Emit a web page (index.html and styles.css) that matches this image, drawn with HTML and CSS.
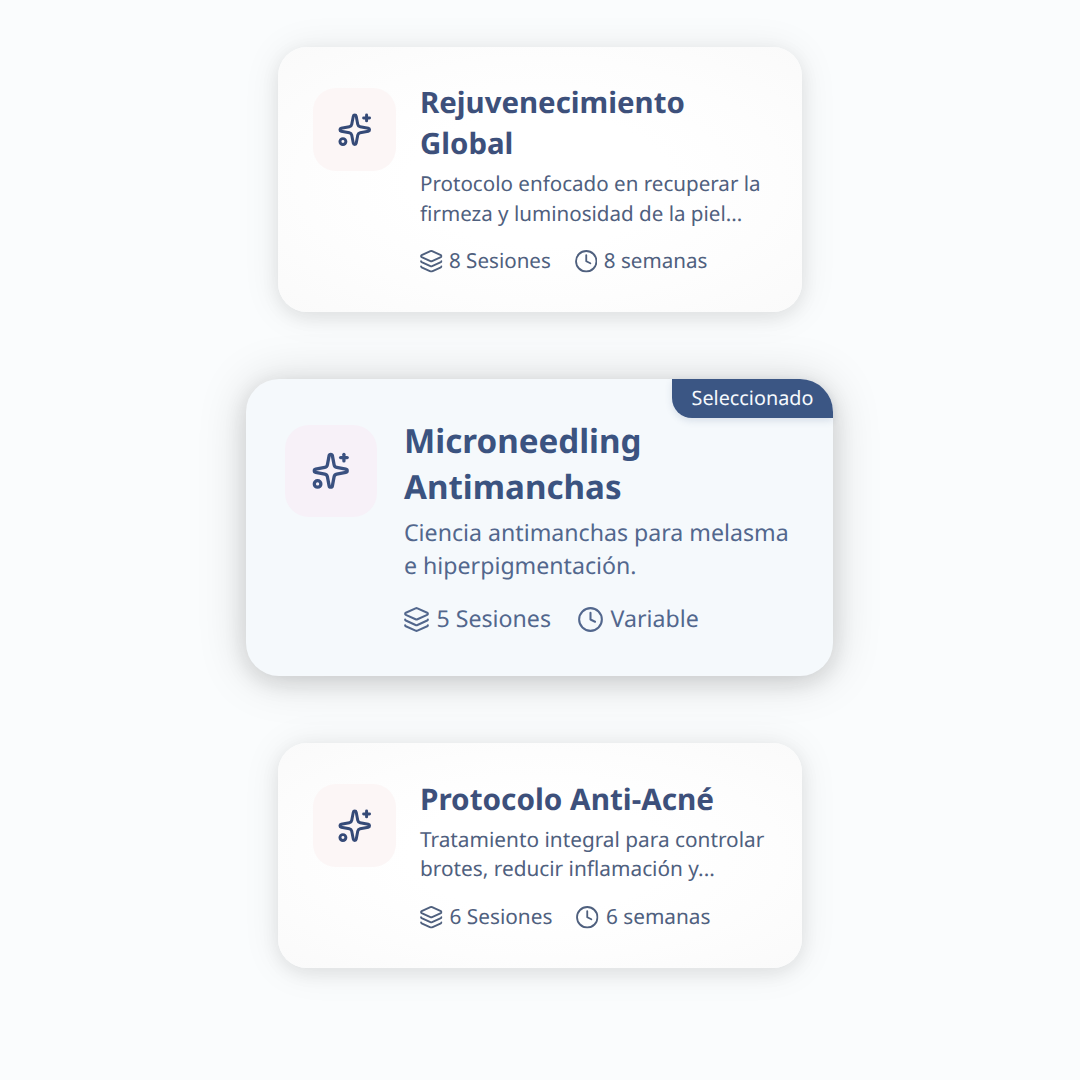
FILE: index.html
```html
<!DOCTYPE html>
<html lang="es">
<head>
<meta charset="utf-8">
<title>Protocolos</title>
<link rel="stylesheet" href="styles.css">
</head>
<body>
<svg class="defs" aria-hidden="true">
  <symbol id="sparkles" viewBox="0 0 24 24"><path d="M11.017 2.814a1 1 0 0 1 1.966 0l1.051 5.558a2 2 0 0 0 1.594 1.594l5.558 1.051a1 1 0 0 1 0 1.966l-5.558 1.051a2 2 0 0 0-1.594 1.594l-1.051 5.558a1 1 0 0 1-1.966 0l-1.051-5.558a2 2 0 0 0-1.594-1.594l-5.558-1.051a1 1 0 0 1 0-1.966l5.558-1.051a2 2 0 0 0 1.594-1.594z"/><path d="M20 2v4"/><path d="M22 4h-4"/><circle cx="4" cy="20" r="2"/></symbol>
  <symbol id="layers" viewBox="1 1 22 22"><path d="M12.83 2.18a2 2 0 0 0-1.66 0L2.6 6.08a1 1 0 0 0 0 1.83l8.58 3.91a2 2 0 0 0 1.66 0l8.58-3.9a1 1 0 0 0 0-1.83z"/><path d="M2 12a1 1 0 0 0 .58.91l8.6 3.91a2 2 0 0 0 1.65 0l8.58-3.9A1 1 0 0 0 22 12"/><path d="M2 17a1 1 0 0 0 .58.91l8.6 3.91a2 2 0 0 0 1.65 0l8.58-3.9A1 1 0 0 0 22 17"/></symbol>
  <symbol id="clock" viewBox="1 1 22 22"><circle cx="12" cy="12" r="10"/><path d="M12 6v6l4 2"/></symbol>
</svg>
<main class="list">
  <article class="card">
    <div class="tile"><svg><use href="#sparkles"/></svg></div>
    <div class="body">
      <h2 class="title">Rejuvenecimiento<br>Global</h2>
      <p class="desc">Protocolo enfocado en recuperar la<br>firmeza y luminosidad de la piel...</p>
      <div class="meta"><span class="fact"><svg><use href="#layers"/></svg>8 Sesiones</span><span class="fact"><svg><use href="#clock"/></svg>8 semanas</span></div>
    </div>
  </article>
  <article class="card selected">
    <span class="badge">Seleccionado</span>
    <div class="tile"><svg><use href="#sparkles"/></svg></div>
    <div class="body">
      <h2 class="title">Microneedling<br>Antimanchas</h2>
      <p class="desc">Ciencia antimanchas para melasma<br>e hiperpigmentación.</p>
      <div class="meta"><span class="fact"><svg><use href="#layers"/></svg>5 Sesiones</span><span class="fact"><svg><use href="#clock"/></svg>Variable</span></div>
    </div>
  </article>
  <article class="card last">
    <div class="tile"><svg><use href="#sparkles"/></svg></div>
    <div class="body">
      <h2 class="title">Protocolo Anti-Acné</h2>
      <p class="desc">Tratamiento integral para controlar<br>brotes, reducir inflamación y...</p>
      <div class="meta"><span class="fact"><svg><use href="#layers"/></svg>6 Sesiones</span><span class="fact"><svg><use href="#clock"/></svg>6 semanas</span></div>
    </div>
  </article>
</main>
</body>
</html>
```
FILE: styles.css
```css
* { box-sizing: border-box; }
body {
  margin: 0;
  height: 1080px;
  overflow: hidden;
  background: #fafcfd;
  font-family: "Noto Sans", sans-serif;
  text-rendering: geometricPrecision;
}
.defs { position: absolute; width: 0; height: 0; }
svg { fill: none; stroke: currentColor; stroke-width: 2; stroke-linecap: round; stroke-linejoin: round; }

.list {
  display: flex;
  flex-direction: column;
  align-items: center;
  gap: 67.5px;
  padding-top: 47px;
}
.card {
  position: relative;
  display: flex;
  align-items: flex-start;
  gap: 24px;
  width: 524px;
  height: 264.5px;
  padding: 35px 34px 0 35px;
  border-radius: 29px;
  background: radial-gradient(ellipse at center, #fff 35%, #fdfdfd 65%, #fafafa 100%);
  box-shadow: 0 5px 18px rgba(20, 24, 20, .08), 0 2px 38px rgba(20, 24, 20, .08);
  color: #4f607e;
}
.tile {
  display: grid;
  place-items: center;
  flex: none;
  width: 83px;
  height: 83px;
  margin-top: 6px;
  border-radius: 23px;
  background: #fcf6f6;
  color: #354a77;
}
.tile svg { width: 35.5px; height: 35.5px; }
.title {
  margin: 0;
  font-size: 29.4px;
  line-height: 41px;
  font-weight: 700;
  color: #3d507b;
  white-space: nowrap;
}
.desc {
  margin: 6px 0 0;
  font-size: 20.58px;
  line-height: 29.5px;
  white-space: nowrap;
}
.meta {
  display: flex;
  gap: 24px;
  margin-top: 16.5px;
  font-size: 20.58px;
  line-height: 30px;
  white-space: nowrap;
}
.fact { display: flex; align-items: center; gap: 6.5px; }
.fact svg { width: 22.5px; height: 22.5px; margin-top: 2px; stroke-width: 1.8; }

.selected {
  width: 587px;
  height: 297px;
  gap: 27px;
  margin-right: 1px;
  padding: 38.5px 38px 0 39px;
  border-radius: 33px;
  background: #f5f9fc;
  box-shadow: 0 6px 22px rgba(20, 22, 20, .13), 0 2px 50px rgba(20, 22, 20, .15);
  color: #52678d;
}
.selected .tile { width: 92px; height: 92px; margin-top: 7px; border-radius: 24px; background: #f7f1f8; color: #3a5180; }
.selected .tile svg { width: 39.5px; height: 39.5px; }
.selected .title { font-size: 33.15px; line-height: 46px; color: #3b5380; }
.selected .desc { margin-top: 6px; font-size: 23.15px; line-height: 33px; }
.selected .meta { gap: 27px; margin-top: 19px; font-size: 23.15px; line-height: 34px; }
.selected .fact { gap: 7.5px; }
.selected .fact svg { width: 25px; height: 25px; margin-top: 3px; }
.badge {
  position: absolute;
  top: 0;
  right: 0;
  width: 161px;
  height: 39px;
  border-radius: 0 33px 0 20px;
  background: #3b5684;
  color: #f5f9fd;
  font-size: 19.8px;
  line-height: 37px;
  text-align: center;
  box-shadow: 0 3px 7px rgba(59, 86, 132, .15);
}
.last { height: 225px; padding-top: 35px; margin-top: -.5px; }
.last .title { font-size: 29.7px; }
.last .desc, .last .meta { font-size: 20.8px; }
.last .desc { margin-top: 6.5px; }
.last .meta { margin-top: 17px; }
.last .fact { gap: 7px; }
.last .tile { margin-top: 6px; }
```
